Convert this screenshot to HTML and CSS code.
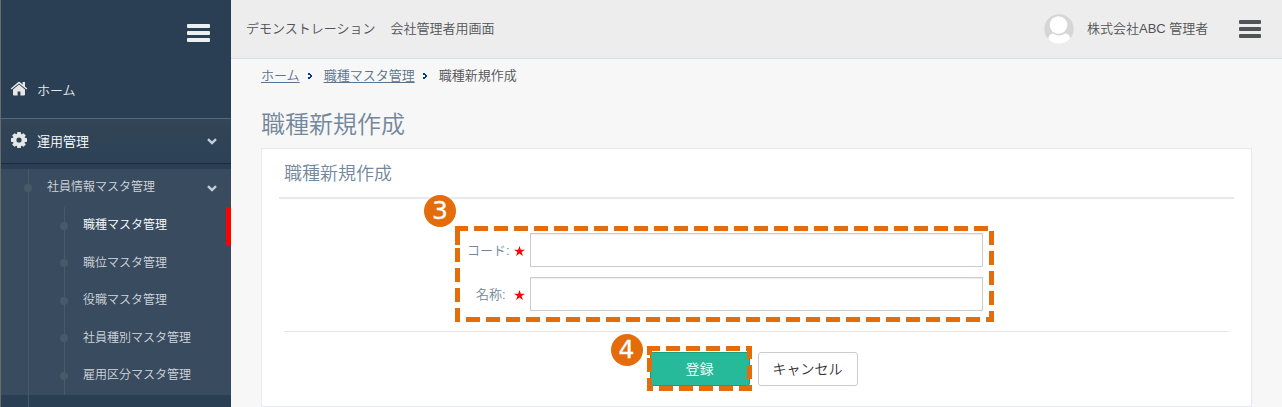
FILE: index.html
```html
<!DOCTYPE html>
<html lang="ja">
<head>
  <meta charset="UTF-8">
  <meta name="viewport" content="width=device-width, initial-scale=1.0">
  <title>職種新規作成</title>
  <link rel="stylesheet" href="styles.css">
</head>
<body>
  <div class="wrapper">
    <nav class="sidebar">
      <div class="sidebar-top"><div class="bars"><span></span><span></span><span></span></div></div>
      <a class="menu-item">
        <svg class="menu-icon" width="18" height="15" viewBox="0 0 18 15"><path d="M9 3.4L3 8.5V13.6a.8.8 0 0 0 .8.8H7.6V10.6h2.8V14.4h3.8a.8.8 0 0 0 .8-.8V8.5z"/><path d="M17.3 7.5L15 5.5V1h-2.4v2.4L10 1.2a1.6 1.6 0 0 0-2 0L.7 7.5l.8 1L9 2.6l7.5 5.9z"/></svg>
        <span>ホーム</span>
      </a>
      <a class="menu-item active">
        <svg class="menu-icon" width="18" height="18" viewBox="-9 -9 18 18"><g><rect x="-1.9" y="-8" width="3.8" height="16" rx=".6"/><rect x="-1.9" y="-8" width="3.8" height="16" rx=".6" transform="rotate(45)"/><rect x="-1.9" y="-8" width="3.8" height="16" rx=".6" transform="rotate(90)"/><rect x="-1.9" y="-8" width="3.8" height="16" rx=".6" transform="rotate(135)"/><circle r="6.4"/></g><circle class="hole" r="2.6"/></svg>
        <span>運用管理</span>
        <svg class="chevron" width="10" height="7" viewBox="0 0 10 7"><path d="M1 1.2L5 5L9 1.2"/></svg>
      </a>
      <div class="submenu">
        <a class="sub-title">社員情報マスタ管理
          <svg class="chevron" width="10" height="7" viewBox="0 0 10 7"><path d="M1 1.2L5 5L9 1.2"/></svg>
        </a>
        <ul class="sub-list">
          <li class="current">職種マスタ管理</li>
          <li>職位マスタ管理</li>
          <li>役職マスタ管理</li>
          <li>社員種別マスタ管理</li>
          <li>雇用区分マスタ管理</li>
        </ul>
      </div>
      <a class="next-title">スキルマスタ管理</a>
    </nav>

    <div class="main">
      <header class="topbar">
        <div class="company"><span>デモンストレーション</span><span>会社管理者用画面</span></div>
        <svg class="user-avatar" width="30" height="30" viewBox="0 0 30 30"><defs><clipPath id="face"><circle cx="15" cy="15" r="14.7"/></clipPath></defs><g clip-path="url(#face)"><rect width="30" height="30" fill="#d6d6d6"/><path d="M3 30L5 22Q7 19 9 19.5Q15 23.5 21 19.5Q24 19 25.5 22L28 30z" fill="#fff"/><circle cx="14.5" cy="11" r="8.8" fill="#fff"/></g></svg>
        <div class="user-name">株式会社ABC 管理者</div>
        <div class="bars dark"><span></span><span></span><span></span></div>
      </header>

      <div class="content">
        <div class="breadcrumb">
          <a href="#">ホーム</a>
          <svg width="5" height="6" viewBox="0 0 5 6"><path d="M0 0H2V1H3V2H4V4H3V5H2V6H0V4H2V2H0z"/></svg>
          <a href="#">職種マスタ管理</a>
          <svg width="5" height="6" viewBox="0 0 5 6"><path d="M0 0H2V1H3V2H4V4H3V5H2V6H0V4H2V2H0z"/></svg>
          <span>職種新規作成</span>
        </div>
        <h1>職種新規作成</h1>
        <div class="panel">
          <h2>職種新規作成</h2>
          <form class="job-form">
            <div class="fields">
              <div class="form-row">
                <label for="code">コード:</label><svg class="star" width="11" height="10" viewBox="0 0 11 10"><path d="M5.5 0L6.8 3.7H11L7.6 6.1L8.9 10L5.5 7.6L2.1 10L3.4 6.1L0 3.7H4.2z"/></svg>
                <input type="text" id="code" name="code">
              </div>
              <div class="form-row">
                <label class="short" for="name">名称:</label><svg class="star" width="11" height="10" viewBox="0 0 11 10"><path d="M5.5 0L6.8 3.7H11L7.6 6.1L8.9 10L5.5 7.6L2.1 10L3.4 6.1L0 3.7H4.2z"/></svg>
                <input type="text" id="name" name="name">
              </div>
              <svg class="marker marker-fields" width="539" height="96"><rect x="2.5" y="2.5" width="534" height="91"/><path d="M2.5 19V2.5H13"/></svg>
              <span class="step step-fields">3</span>
            </div>
            <div class="buttons">
              <div class="submit-wrap">
                <button type="submit" class="btn btn-primary">登録</button>
                <svg class="marker marker-submit" width="105" height="45"><rect x="2.5" y="2.5" width="100" height="40"/><path d="M2.5 9V2.5H13"/></svg>
                <span class="step step-submit">4</span>
              </div>
              <button type="button" class="btn btn-cancel">キャンセル</button>
            </div>
          </form>
        </div>
      </div>
    </div>
  </div>
</body>
</html>
```

FILE: styles.css
```css
* { box-sizing: border-box; }
body { margin: 0; font-family: "Liberation Sans", "Noto Sans CJK JP", sans-serif; font-size: 13px; font-weight: 350; background: #f7f7f7; color: #515356; overflow: hidden; }
.wrapper { display: flex; height: 407px; overflow: hidden; }

.sidebar { width: 231px; flex: none; background: #2a3f54; border-left: 1px solid #6b6b6b; color: #e7e7e7; overflow: hidden; }
.sidebar-top { height: 63px; padding: 24px 21px 0 0; display: flex; justify-content: flex-end; }
.bars { display: flex; flex-direction: column; gap: 3px; width: 23px; }
.bars span { height: 4px; border-radius: 1px; background: #ecf0f1; }
.bars.dark { width: 22px; }
.bars.dark span { background: #515356; }
.menu-item { display: flex; align-items: center; height: 55px; padding: 0 14px 0 9px; }
.menu-item span { padding-bottom: 2px; }
.menu-icon { fill: #e7e7e7; margin-right: 9px; }
.menu-item:not(.active) .menu-icon { margin-top: -4px; }
.menu-item.active { height: 46px; border-top: 1px solid #566a7a; border-bottom: 1px solid #1b2b3b; background: linear-gradient(#334556, #2c4257); color: #fff; }
.menu-item.active .menu-icon { margin-top: -3px; }
.hole { fill: #2f4356; }
.chevron { margin-left: auto; fill: none; stroke: #c4cfda; stroke-width: 2.4; }
.submenu { margin-top: 5px; background: #394b5f; height: 226px; background-image: linear-gradient(#475a68, #475a68); background-size: 1px 100%; background-position: 27px 0; background-repeat: no-repeat; color: #d0d5da; font-size: 12px; }
.sub-title { display: flex; align-items: center; height: 38px; padding: 0 14px 5px 20px; }
.sub-title::before { content: ""; width: 8px; height: 8px; border-radius: 50%; background: #475a68; margin: 5px 15px 0 3px; }
.sub-title .chevron { margin-top: 6px; }
.sub-list { list-style: none; margin: 0 0 0 63px; padding: 0; border-left: 1px solid #475a68; height: 188px; }
.sub-list li { display: flex; align-items: center; height: 37.5px; padding-bottom: 4px; margin-left: -5px; }
.sub-list li::before { content: ""; width: 8px; height: 8px; border-radius: 50%; background: #475a68; margin: 4px 15px 0 0; }
.sub-list .current { color: #fff; box-shadow: inset -5px 0 #f00; }
.next-title { display: block; padding: 10px 0 0 46px; line-height: 18px; font-size: 12px; background: linear-gradient(#475a68, #475a68) 27px 0 / 1px 100% no-repeat; }

.main { flex: 1; }
.topbar { display: flex; align-items: center; height: 59px; padding: 0 21px 0 15px; background: #ededed; border-bottom: 1px solid #d9dee4; }
.company { flex: 1; display: flex; gap: 15px; padding-bottom: 4px; }
.user-avatar { margin-right: 13px; }
.user-name { padding-bottom: 4px; width: 123px; margin-right: 29px; white-space: nowrap; }
.content { padding: 5px 30px 0; }
.breadcrumb { display: flex; align-items: center; height: 20px; color: #515356; }
.breadcrumb a { color: #5a738e; text-underline-offset: 2px; }
.breadcrumb svg { fill: #003a80; margin: 4px 11px 0 8px; }
h1 { margin: 24px 0 8px; font-size: 24px; line-height: 34px; height: 32px; font-weight: 350; color: #73879c; }
.panel { height: 259px; padding: 0 17px; background: #fff; border: 1px solid #e6e9ed; }
h2 { margin: 0; padding-left: 5px; height: 50px; line-height: 51px; border-bottom: 2px solid #e6e9ed; font-size: 18px; font-weight: 350; color: #73879c; }
.job-form { padding: 0 5px; }
.fields { position: relative; height: 133px; padding: 34px 0 0 183px; border-bottom: 1px solid #e5e5e5; display: flex; flex-direction: column; gap: 10px; }
.form-row { display: flex; align-items: center; height: 34px; color: #73879c; }
.form-row label { width: 47px; padding-bottom: 1px; white-space: nowrap; }
.form-row .short { padding-left: 9px; }
.star { fill: #f00; margin: 1px 5px 0 0; }
.form-row input { width: 453px; height: 34px; border: 1px solid #ccc; box-shadow: inset 0 1px 1px rgba(0,0,0,0.075); background: #fff; }
.buttons { display: flex; justify-content: center; gap: 8px; padding: 20px 6px 0 0; }
.submit-wrap { position: relative; }
.btn { display: block; width: 100px; height: 34px; padding: 0 0 3px; border: 1px solid #ccc; border-radius: 3px; background: #fff; color: #333; font-family: inherit; font-size: 14px; font-weight: 350; }
.btn-primary { background: #26b99a; border-color: #169f85; color: #fff; }

/* step markers over the form */
.marker { position: absolute; fill: none; stroke: #e46c0a; stroke-width: 5; }
.marker rect { stroke-dasharray: 14 6; stroke-dashoffset: 3.5; }
.marker-fields { left: 171px; top: 27px; }
.marker-submit { left: -3px; top: -6px; }
.step { position: absolute; width: 32px; height: 32px; border-radius: 50%; background: #e46c0a; color: #fff; font: 25px/32px "DejaVu Sans", sans-serif; -webkit-text-stroke: 0.3px #fff; text-align: center; }
.step-fields { left: 140px; top: -4px; }
.step-submit { left: -39px; top: -18px; }
```
